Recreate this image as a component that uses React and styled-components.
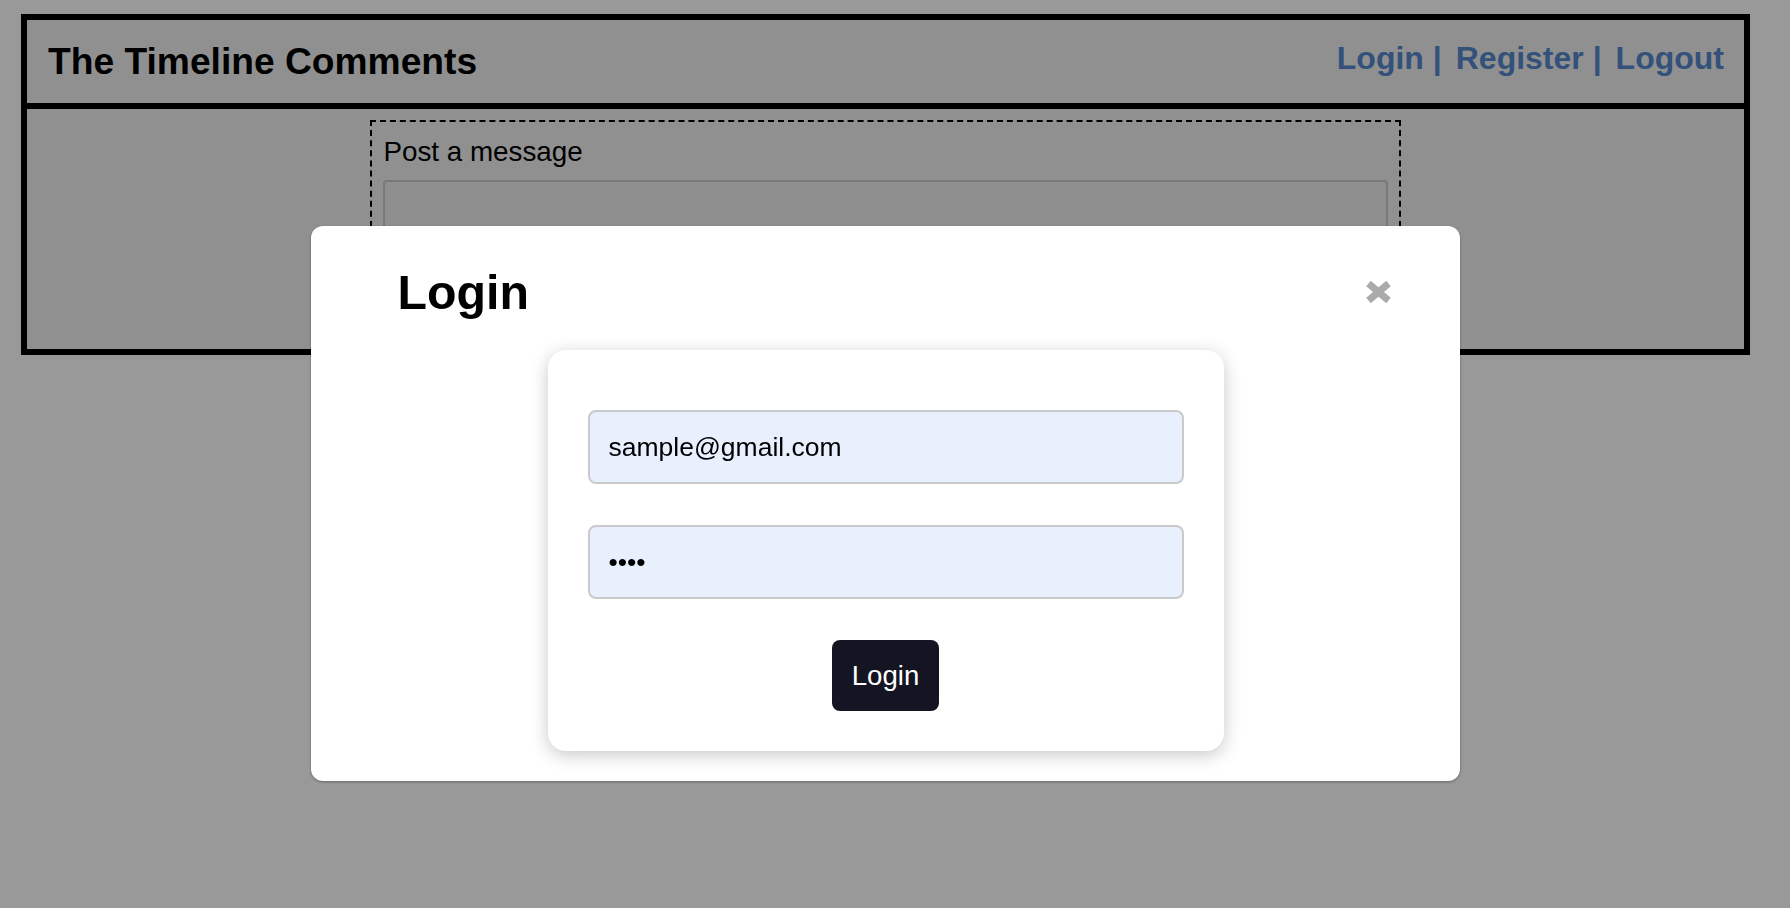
import React from "react";
import styled, { createGlobalStyle } from "styled-components";

const Global = createGlobalStyle`
  html, body { background: #ffffff; }
  body {
    margin: 8px;
    font-family: "Liberation Sans", Arial, sans-serif;
    color: #000;
  }
  * { font-family: "Liberation Sans", Arial, sans-serif; }
`;

const Frame = styled.div`
  margin: 6px 32px 0 13px;
  border: 3px solid #000;
  background: #f1f1f1;
`;

const Header = styled.header`
  display: flex;
  align-items: center;
  justify-content: space-between;
  height: 83px;
  padding: 0 20px 0 21px;
  border: 3px solid #000;
`;

const SiteTitle = styled.h1`
  margin: 0;
  font-size: 37.2px;
  font-weight: 700;
  line-height: normal;
`;

const Nav = styled.nav`
  display: flex;
  align-items: center;
  gap: 14px;
  padding-bottom: 7px;
`;

const NavLink = styled.a`
  font-size: 32px;
  font-weight: 700;
  color: #5588cc;
  text-decoration: none;
  cursor: pointer;
  white-space: pre;
`;

const Main = styled.main`
  border: 3px solid #000;
  padding: 11px 0;
`;

const PostBox = styled.section`
  box-sizing: border-box;
  width: 60%;
  height: 218px;
  margin: 0 auto;
  padding: 14px 11px;
  border: 2px dashed #000;
  display: flex;
  flex-direction: column;
`;

const PostLabel = styled.label`
  font-size: 27.8px;
  line-height: normal;
  margin-bottom: 12px;
`;

const PostArea = styled.textarea`
  flex: 1;
  resize: none;
  border: 2px solid #c8c8c8;
  border-radius: 4px;
  background: #eeeeee;
`;

const Overlay = styled.div`
  position: fixed;
  inset: 0;
  box-sizing: border-box;
  background: rgba(0, 0, 0, 0.4);
  display: flex;
  justify-content: center;
  align-items: flex-start;
  padding: 226px 19px 0 0;
`;

const Modal = styled.div`
  width: 1149px;
  box-sizing: border-box;
  background: #fff;
  border-radius: 12px;
  box-shadow: 0 1px 3px rgba(0, 0, 0, 0.35);
  padding: 38px 0 30px;
`;

const ModalHeader = styled.div`
  display: flex;
  align-items: center;
  justify-content: space-between;
  padding: 0 67px 0 86.5px;
`;

const ModalTitle = styled.h2`
  margin: 0;
  font-size: 48.3px;
  font-weight: 700;
  line-height: normal;
`;

const CloseButton = styled.button`
  display: flex;
  background: none;
  border: none;
  padding: 0;
  cursor: pointer;
`;

const Card = styled.form`
  box-sizing: border-box;
  width: 676px;
  margin: 30px auto 0;
  padding: 60px 40px 40px;
  background: #fff;
  border-radius: 18px;
  box-shadow: 0 4px 18px rgba(0, 0, 0, 0.22);
  display: flex;
  flex-direction: column;
  align-items: center;
  gap: 41px;
`;

const Field = styled.input`
  box-sizing: border-box;
  width: 100%;
  height: 74px;
  padding: 0 19px;
  border: 2px solid #cacaca;
  border-radius: 8px;
  background: #e8f0fe;
  color: #000;
  font-size: 26.5px;
  outline: none;
`;

const SubmitButton = styled.button`
  height: 71px;
  padding: 0 20px;
  border: none;
  border-radius: 8px;
  background: #141423;
  color: #fff;
  font-size: 27.6px;
  cursor: pointer;
`;

function CloseIcon() {
  return (
    <svg width="29" height="26" viewBox="0 0 29 26" aria-hidden="true">
      <line x1="4.5" y1="4.5" x2="24.5" y2="21.5" stroke="#aaaaaa" strokeWidth="7" />
      <line x1="24.5" y1="4.5" x2="4.5" y2="21.5" stroke="#aaaaaa" strokeWidth="7" />
    </svg>
  );
}

export default function App() {
  return (
    <>
      <Global />
      <Frame>
        <Header>
          <SiteTitle>The Timeline Comments</SiteTitle>
          <Nav>
            <NavLink>Login |</NavLink>
            <NavLink>Register |</NavLink>
            <NavLink>Logout</NavLink>
          </Nav>
        </Header>
        <Main>
          <PostBox>
            <PostLabel>Post a message</PostLabel>
            <PostArea />
          </PostBox>
        </Main>
      </Frame>
      <Overlay>
        <Modal>
          <ModalHeader>
            <ModalTitle>Login</ModalTitle>
            <CloseButton type="button" aria-label="Close">
              <CloseIcon />
            </CloseButton>
          </ModalHeader>
          <Card onSubmit={(e) => e.preventDefault()}>
            <Field type="email" defaultValue="sample@gmail.com" />
            <Field type="password" defaultValue="1234" />
            <SubmitButton type="submit">Login</SubmitButton>
          </Card>
        </Modal>
      </Overlay>
    </>
  );
}
